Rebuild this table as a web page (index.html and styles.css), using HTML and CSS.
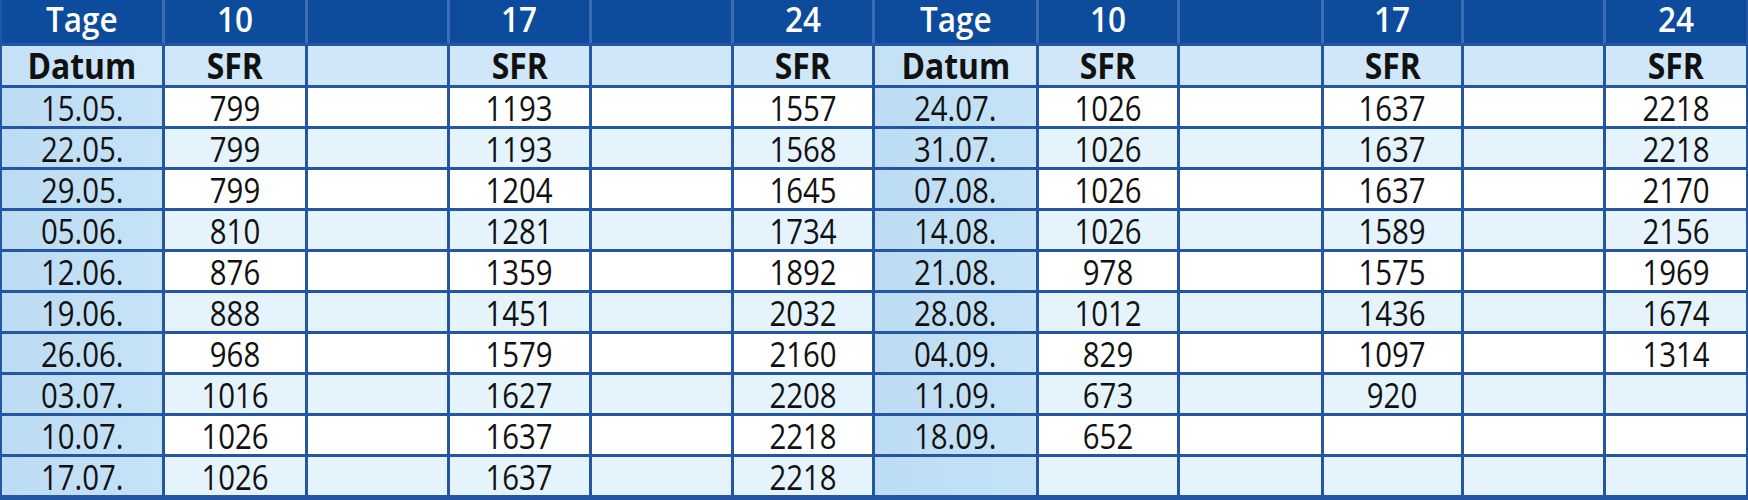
FILE: index.html
```html
<!DOCTYPE html>
<html lang="de">
<head>
<meta charset="utf-8">
<title>SFR Tabelle</title>
<link rel="stylesheet" href="styles.css">
</head>
<body>
<div class="table">
  <div class="row head">
    <div><span>Tage</span></div><div><span>10</span></div><div></div><div><span>17</span></div><div></div><div><span>24</span></div>
    <div><span>Tage</span></div><div><span>10</span></div><div></div><div><span>17</span></div><div></div><div><span>24</span></div>
  </div>
  <div class="row sub">
    <div><span>Datum</span></div><div><span>SFR</span></div><div></div><div><span>SFR</span></div><div></div><div><span>SFR</span></div>
    <div><span>Datum</span></div><div><span>SFR</span></div><div></div><div><span>SFR</span></div><div></div><div><span>SFR</span></div>
  </div>
  <div class="row data">
    <div><span>15.05.</span></div><div><span>799</span></div><div></div><div><span>1193</span></div><div></div><div><span>1557</span></div>
    <div><span>24.07.</span></div><div><span>1026</span></div><div></div><div><span>1637</span></div><div></div><div><span>2218</span></div>
  </div>
  <div class="row data alt">
    <div><span>22.05.</span></div><div><span>799</span></div><div></div><div><span>1193</span></div><div></div><div><span>1568</span></div>
    <div><span>31.07.</span></div><div><span>1026</span></div><div></div><div><span>1637</span></div><div></div><div><span>2218</span></div>
  </div>
  <div class="row data">
    <div><span>29.05.</span></div><div><span>799</span></div><div></div><div><span>1204</span></div><div></div><div><span>1645</span></div>
    <div><span>07.08.</span></div><div><span>1026</span></div><div></div><div><span>1637</span></div><div></div><div><span>2170</span></div>
  </div>
  <div class="row data alt">
    <div><span>05.06.</span></div><div><span>810</span></div><div></div><div><span>1281</span></div><div></div><div><span>1734</span></div>
    <div><span>14.08.</span></div><div><span>1026</span></div><div></div><div><span>1589</span></div><div></div><div><span>2156</span></div>
  </div>
  <div class="row data">
    <div><span>12.06.</span></div><div><span>876</span></div><div></div><div><span>1359</span></div><div></div><div><span>1892</span></div>
    <div><span>21.08.</span></div><div><span>978</span></div><div></div><div><span>1575</span></div><div></div><div><span>1969</span></div>
  </div>
  <div class="row data alt">
    <div><span>19.06.</span></div><div><span>888</span></div><div></div><div><span>1451</span></div><div></div><div><span>2032</span></div>
    <div><span>28.08.</span></div><div><span>1012</span></div><div></div><div><span>1436</span></div><div></div><div><span>1674</span></div>
  </div>
  <div class="row data">
    <div><span>26.06.</span></div><div><span>968</span></div><div></div><div><span>1579</span></div><div></div><div><span>2160</span></div>
    <div><span>04.09.</span></div><div><span>829</span></div><div></div><div><span>1097</span></div><div></div><div><span>1314</span></div>
  </div>
  <div class="row data alt">
    <div><span>03.07.</span></div><div><span>1016</span></div><div></div><div><span>1627</span></div><div></div><div><span>2208</span></div>
    <div><span>11.09.</span></div><div><span>673</span></div><div></div><div><span>920</span></div><div></div><div></div>
  </div>
  <div class="row data">
    <div><span>10.07.</span></div><div><span>1026</span></div><div></div><div><span>1637</span></div><div></div><div><span>2218</span></div>
    <div><span>18.09.</span></div><div><span>652</span></div><div></div><div></div><div></div><div></div>
  </div>
  <div class="row data alt">
    <div><span>17.07.</span></div><div><span>1026</span></div><div></div><div><span>1637</span></div><div></div><div><span>2218</span></div>
    <div></div><div></div><div></div><div></div><div></div><div></div>
  </div>
</div>
</body>
</html>
```
FILE: styles.css
```css
html, body {
  margin: 0;
  padding: 0;
  background: #ffffff;
}

.table {
  width: 1748px;
  height: 500px;
  box-sizing: border-box;
  padding: 0 2px 2px 2px;
  background: #2556a3;
  display: flex;
  flex-direction: column;
  gap: 3px;
  font-family: "Open Sans", "DejaVu Sans Condensed", sans-serif;
  font-size: 35px;
  color: #111111;
}

.row {
  display: grid;
  grid-template-columns: 160px 140px 139px 139px 139px 138px 161px 138px 141px 137px 139px 140px;
  column-gap: 3px;
  height: 38px;
}

.row > div {
  text-align: center;
  line-height: 36px;
  height: 38px;
  padding-top: 2px;
  box-sizing: border-box;
  white-space: nowrap;
  background: #ffffff;
}

.row span {
  display: inline-block;
  transform: scaleX(0.84);
}

.row.alt > div {
  background: #e5f3fc;
}

.row.data > div:nth-child(1),
.row.data > div:nth-child(7) {
  background: linear-gradient(90deg, #bcdcf3 0%, #c6e3f7 100%);
}

.row.head {
  height: 43px;
  background: #3b6cb4;
}

.row.head > div {
  height: 43px;
  background: #0d4b9c;
  color: #ffffff;
  font-weight: 600;
  padding-top: 1px;
}

.row.head span {
  transform: scaleX(0.9);
}

.row.sub {
  height: 39px;
}

.row.sub > div {
  height: 39px;
  background: #cfe7f8;
  font-weight: bold;
}

.row.sub span {
  transform: scaleX(0.91);
}

.row.sub > div:nth-child(1),
.row.sub > div:nth-child(7) {
  background: linear-gradient(90deg, #c3e0f5 0%, #d3e9f9 100%);
}
```
